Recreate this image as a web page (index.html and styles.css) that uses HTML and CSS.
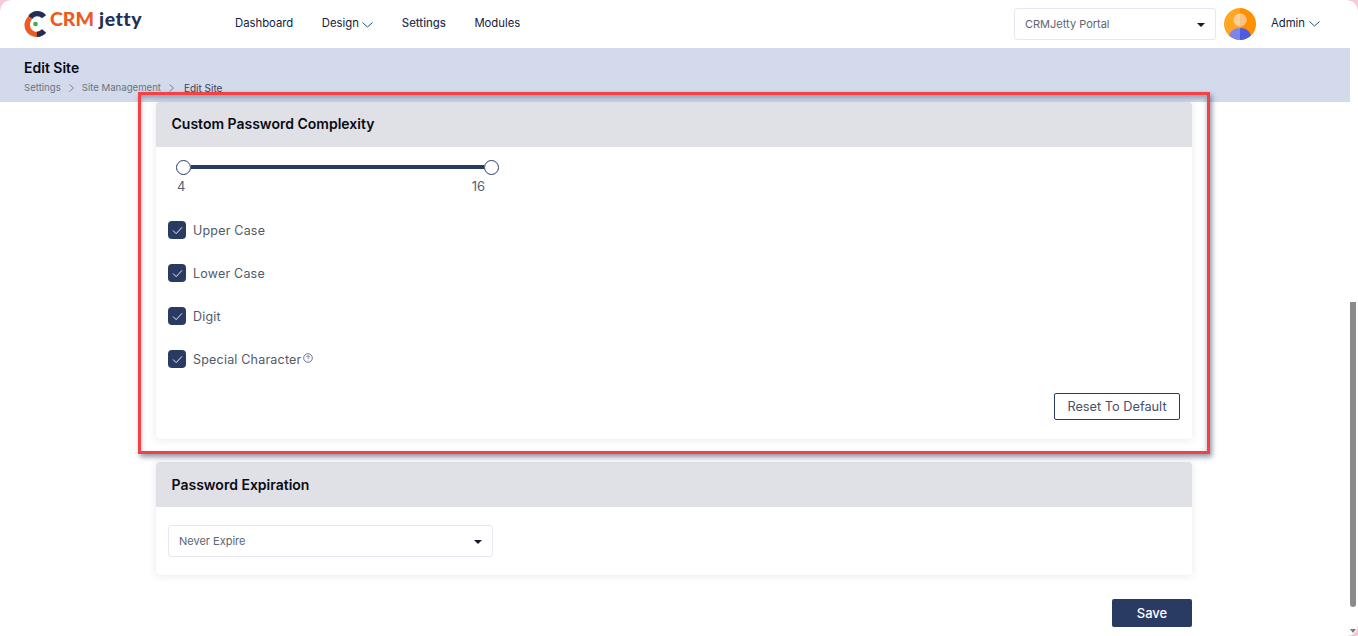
FILE: index.html
```html
<!DOCTYPE html>
<html lang="en">
<head>
<meta charset="utf-8">
<title>Edit Site</title>
<link rel="stylesheet" href="styles.css">
</head>
<body>
<div class="page">
  <header class="topbar">
    <div class="logo">
      <svg class="logo-mark" width="23" height="28" viewBox="0 0 25 30">
        <path d="M24 5.500C21.500 2.500 18 1 14.500 1C10 1 6.500 3.200 4.500 6.500L9 9.500C10.200 7.800 12 6.500 14.500 6.500C16.500 6.500 18 7.300 19.500 8.700Z" fill="#1f2f57"/>
        <path d="M4.500 6.500C2 10 0.500 12.500 0.500 16C0.500 23.500 6.500 29 14 29C18 29 21.500 27.500 24 24.500L19.500 20.800C18 22.500 16 23.500 14 23.500C9.500 23.500 6.500 20 6.500 15.500C6.500 13 7.500 11 9 9.500Z" fill="#ee5a24"/>
        <path d="M14 29C18 29 21.500 27.500 24 24.500L19.500 20.800C18 22.500 16 23.500 14 23.500Z" fill="#1f2f57"/>
        <circle cx="12.500" cy="15" r="2.500" fill="#3fae49"/>
      </svg>
      <span class="logo-text"><span class="logo-crm">CRM</span><span class="logo-jetty">jetty</span></span>
    </div>
    <nav class="nav">
      <a class="nav-link">Dashboard</a>
      <a class="nav-link">Design<svg class="chev" width="11" height="6" viewBox="0 0 11 6"><path d="M0.500 0.500L5.500 5L10.500 0.500" fill="none" stroke="#1f4f80" stroke-width="1"/></svg></a>
      <a class="nav-link nav-strong">Settings</a>
      <a class="nav-link">Modules</a>
    </nav>
    <div class="top-right">
      <div class="select portal-select">
        <span>CRMJetty Portal</span>
        <span class="caret"></span>
      </div>
      <svg class="avatar" width="32" height="32" viewBox="0 0 32 32">
        <defs><clipPath id="avatar-clip"><circle cx="16" cy="16" r="16"/></clipPath></defs>
        <g clip-path="url(#avatar-clip)">
          <rect width="16" height="32" fill="#ffa722"/>
          <rect x="16" width="16" height="32" fill="#ff9100"/>
          <path d="M16 20C10 20 5 23 5 30V32H16Z" fill="#7b86e8"/>
          <path d="M16 20C22 20 27 23 27 30V32H16Z" fill="#4f5be0"/>
          <circle cx="16" cy="12" r="6.500" fill="#ffd09a"/>
          <path d="M16 5.500A6.500 6.500 0 0 1 16 18.500Z" fill="#fcc282"/>
        </g>
      </svg>
      <a class="user">Admin<svg class="chev" width="11" height="6" viewBox="0 0 11 6"><path d="M0.500 0.500L5.500 5L10.500 0.500" fill="none" stroke="#1f4f80" stroke-width="1"/></svg></a>
    </div>
  </header>

  <section class="banner">
    <h1 class="banner-title">Edit Site</h1>
    <div class="crumbs">
      <span>Settings</span>
      <svg class="crumb-sep" width="5" height="8" viewBox="0 0 5 8"><path d="M0.500 0.500L4.500 4L0.500 7.500" fill="none" stroke="#7d8593" stroke-width="1"/></svg>
      <span>Site Management</span>
      <svg class="crumb-sep" width="5" height="8" viewBox="0 0 5 8"><path d="M0.500 0.500L4.500 4L0.500 7.500" fill="none" stroke="#7d8593" stroke-width="1"/></svg>
      <span class="crumb-current">Edit Site</span>
    </div>
  </section>

  <main class="content">
    <section class="card card-complexity">
      <h2 class="card-head">Custom Password Complexity</h2>
      <div class="card-body">
        <div class="slider">
          <div class="slider-track"><span class="thumb"></span><span class="bar"></span><span class="thumb"></span></div>
          <div class="slider-labels"><span>4</span><span>16</span></div>
        </div>
        <ul class="checks">
          <li class="check"><span class="box"><svg width="11" height="9" viewBox="0 0 12 10"><path d="M1 5L4.500 8.500L11 1.500" fill="none" stroke="#fff" stroke-width="1"/></svg></span>Upper Case</li>
          <li class="check"><span class="box"><svg width="11" height="9" viewBox="0 0 12 10"><path d="M1 5L4.500 8.500L11 1.500" fill="none" stroke="#fff" stroke-width="1"/></svg></span>Lower Case</li>
          <li class="check"><span class="box"><svg width="11" height="9" viewBox="0 0 12 10"><path d="M1 5L4.500 8.500L11 1.500" fill="none" stroke="#fff" stroke-width="1"/></svg></span>Digit</li>
          <li class="check"><span class="box"><svg width="11" height="9" viewBox="0 0 12 10"><path d="M1 5L4.500 8.500L11 1.500" fill="none" stroke="#fff" stroke-width="1"/></svg></span>Special Character<svg class="help" width="10" height="10" viewBox="0 0 10 10"><circle cx="5" cy="5" r="4.300" fill="none" stroke="#2b3d66" stroke-width="0.700"/><path d="M3.700 4C3.700 3.200 4.300 2.800 5 2.800C5.800 2.800 6.300 3.300 6.300 3.900C6.300 4.700 5 4.800 5 5.800" fill="none" stroke="#2b3d66" stroke-width="0.700"/><circle cx="5" cy="7.100" r="0.450" fill="#2b3d66"/></svg></li>
        </ul>
        <div class="card-actions"><button class="btn-outline">Reset To Default</button></div>
      </div>
    </section>

    <section class="card card-expiry">
      <h2 class="card-head">Password Expiration</h2>
      <div class="card-body">
        <div class="select expiry-select">
          <span>Never Expire</span>
          <span class="caret"></span>
        </div>
      </div>
    </section>

    <div class="page-actions"><button class="btn-save">Save</button></div>
  </main>

  <div class="highlight"></div>

  <div class="scrollbar">
    <div class="scroll-thumb"></div>
    <div class="scroll-arrow"></div>
  </div>
  <span class="corner corner-tl"></span>
  <span class="corner corner-tr"></span>
  <span class="corner corner-br"></span>
</div>
</body>
</html>
```

FILE: styles.css
```css
* { box-sizing: border-box; }
html, body { margin: 0; padding: 0; height: 100%; background: #fff; }
body { font-family: "Inter", "Liberation Sans", sans-serif; color: #1b2233; overflow: hidden; }

.page { position: relative; width: 1358px; height: 636px; overflow: hidden; background: #fff; }

.topbar { height: 48px; display: flex; align-items: center; padding-left: 24px; background: #fff; }
.logo { width: 211px; display: flex; align-items: flex-start; height: 30px; padding-top: 1px; }
.logo-mark { display: block; flex: none; }
.logo-text { font-family: "Lato", "Liberation Sans", sans-serif; font-weight: 900; font-size: 19.500px; line-height: 22px; margin-left: 3px; margin-top: -2px; white-space: nowrap; }
.logo-crm { color: #ee5a24; }
.logo-jetty { color: #1f2f57; margin-left: 5px; letter-spacing: 0.500px; }

.nav { display: flex; align-items: center; gap: 28.500px; font-size: 11.300px; color: #14213d; }
.nav-link { display: flex; align-items: center; line-height: 14px; margin-top: -2px; }
.nav-strong { font-weight: 500; color: #2a3550; }
.chev { margin-left: 3.500px; margin-top: 3px; }

.top-right { display: flex; align-items: center; margin-left: auto; padding-right: 38px; }
.select { display: flex; align-items: center; justify-content: space-between; background: #fff; border: 1px solid #e6e8f1; border-radius: 3px; color: #5d6472; font-size: 11px; }
.portal-select { width: 202px; height: 32px; padding: 0 10px; margin-top: -1px; }
.caret { width: 0; height: 0; border-left: 4px solid transparent; border-right: 4px solid transparent; border-top: 4px solid #14192b; margin-top: 2px; }
.avatar { display: block; margin-left: 8px; margin-top: -1px; }
.user { display: flex; align-items: center; width: 49px; margin-left: 15px; font-size: 11.300px; color: #14213d; line-height: 14px; margin-top: -3px; }

.banner { height: 54px; background: #d2daec; padding: 11px 24px 0; }
.banner-title { margin: 0; font-size: 14px; line-height: 17px; font-weight: 600; color: #070a12; }
.crumbs { display: flex; align-items: center; gap: 8px; margin-top: 6px; font-size: 9.600px; line-height: 12px; color: #6b7280; }
.crumb-current { color: #3a4358; font-size: 10px; margin-left: 2px; }

.content { width: 1036px; margin-left: 156px; }
.card { background: #fff; border-radius: 4px; box-shadow: 0 1px 8px rgba(30, 40, 70, 0.10); overflow: hidden; }
.card-head { margin: 0; height: 45px; display: flex; align-items: center; padding-left: 15.500px; background: #dfe1e6; font-size: 14px; font-weight: 600; color: #080b12; }
.card-complexity { height: 337px; }
.card-complexity .card-head { padding-bottom: 2px; }
.card-expiry { height: 113px; margin-top: 23px; }
.card-body { padding: 12px 12px 0; }

.slider { width: 331px; }
.slider-track { display: flex; align-items: center; height: 16px; margin-left: 8px; }
.thumb { width: 15px; height: 15px; border: 1.300px solid #2a3b63; border-radius: 50%; background: #fff; flex: none; }
.bar { flex: 1; height: 4px; background: #2a3b63; }
.slider-labels { display: flex; justify-content: space-between; width: 317px; padding: 0 0 0 9px; margin-top: 4px; font-size: 13px; line-height: 15px; color: #58606f; }

.checks { list-style: none; margin: 27px 0 0; padding: 0; display: flex; flex-direction: column; gap: 25px; }
.check { display: flex; align-items: center; height: 18px; font-size: 12.500px; letter-spacing: 0.200px; color: #525a6a; }
.box { width: 18px; height: 18px; border-radius: 4px; background: #2a3b63; display: flex; align-items: center; justify-content: center; margin-right: 7px; flex: none; }
.help { margin-left: 2px; margin-top: -3px; }

.card-actions { display: flex; justify-content: flex-end; margin-top: 25px; }
.btn-outline { width: 126px; height: 27px; background: #fff; border: 1px solid #2a3b63; border-radius: 2px; font-family: inherit; font-size: 12.750px; color: #475067; padding: 0; }

.expiry-select { width: 325px; height: 32px; padding: 0 10px; margin-top: 6px; }

.page-actions { display: flex; justify-content: flex-end; margin-top: 24px; }
.btn-save { width: 80px; height: 28px; background: #2a3b63; border: 0; border-radius: 2px; color: #fff; font-family: inherit; font-size: 13px; font-weight: 500; padding: 0; }

.highlight { position: absolute; left: 138px; top: 92px; width: 1072px; height: 362px; border: 3px solid #f44144; box-shadow: 2px 3px 5px rgba(40, 50, 80, 0.5), inset 0 3px 5px rgba(40, 50, 80, 0.35); pointer-events: none; }

.scrollbar { position: absolute; right: 0; top: 48px; bottom: 0; width: 8px; background: #fff; }
.scroll-thumb { position: absolute; left: 0; right: 2px; top: 254px; height: 305px; border-radius: 0 0 3px 3px; background: #8b8b8b; }
.scroll-arrow { position: absolute; left: 0; bottom: 3px; width: 0; height: 0; border-left: 3px solid transparent; border-right: 3px solid transparent; border-top: 4px solid #7a7a7a; }

.corner { position: absolute; width: 10px; height: 10px; }
.corner-tl { left: 0; top: 0; background: radial-gradient(circle at 100% 100%, transparent 9px, #f6c9d6 10px); }
.corner-tr { right: 0; top: 0; background: radial-gradient(circle at 0 100%, transparent 9px, #f6c9d6 10px); }
.corner-br { right: 0; bottom: 0; background: radial-gradient(circle at 0 0, transparent 9px, #f6c9d6 10px); }
```
